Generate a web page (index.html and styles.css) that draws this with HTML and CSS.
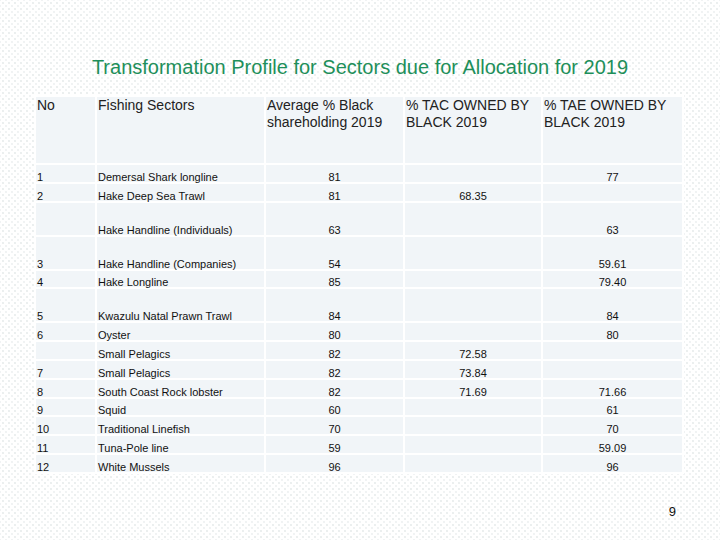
FILE: index.html
```html
<!DOCTYPE html>
<html lang="en">
<head>
<meta charset="utf-8">
<title>Transformation Profile</title>
<link rel="stylesheet" href="styles.css">
</head>
<body>
<main class="slide">
  <h1 class="title">Transformation Profile for Sectors due for Allocation for 2019</h1>
  <table class="profile">
    <colgroup>
      <col class="c-no"><col class="c-sector"><col class="c-avg"><col class="c-tac"><col class="c-tae">
    </colgroup>
    <thead>
      <tr class="head">
        <th>No</th>
        <th>Fishing Sectors</th>
        <th>Average % Black<br>shareholding 2019</th>
        <th>% TAC OWNED BY<br>BLACK 2019</th>
        <th>% TAE OWNED BY<br>BLACK 2019</th>
      </tr>
    </thead>
    <tbody>
      <tr><td>1</td><td>Demersal Shark longline</td><td class="num">81</td><td class="num"></td><td class="num">77</td></tr>
      <tr><td>2</td><td>Hake Deep Sea Trawl</td><td class="num">81</td><td class="num">68.35</td><td class="num"></td></tr>
      <tr class="tall"><td></td><td>Hake Handline (Individuals)</td><td class="num">63</td><td class="num"></td><td class="num">63</td></tr>
      <tr class="tall"><td>3</td><td>Hake Handline (Companies)</td><td class="num">54</td><td class="num"></td><td class="num">59.61</td></tr>
      <tr><td>4</td><td>Hake Longline</td><td class="num">85</td><td class="num"></td><td class="num">79.40</td></tr>
      <tr class="tall"><td>5</td><td>Kwazulu Natal Prawn Trawl</td><td class="num">84</td><td class="num"></td><td class="num">84</td></tr>
      <tr><td>6</td><td>Oyster</td><td class="num">80</td><td class="num"></td><td class="num">80</td></tr>
      <tr><td></td><td>Small Pelagics</td><td class="num">82</td><td class="num">72.58</td><td class="num"></td></tr>
      <tr><td>7</td><td>Small Pelagics</td><td class="num">82</td><td class="num">73.84</td><td class="num"></td></tr>
      <tr><td>8</td><td>South Coast Rock lobster</td><td class="num">82</td><td class="num">71.69</td><td class="num">71.66</td></tr>
      <tr><td>9</td><td>Squid</td><td class="num">60</td><td class="num"></td><td class="num">61</td></tr>
      <tr><td>10</td><td>Traditional Linefish</td><td class="num">70</td><td class="num"></td><td class="num">70</td></tr>
      <tr><td>11</td><td>Tuna-Pole line</td><td class="num">59</td><td class="num"></td><td class="num">59.09</td></tr>
      <tr><td>12</td><td>White Mussels</td><td class="num">96</td><td class="num"></td><td class="num">96</td></tr>
    </tbody>
  </table>
  <div class="page-no">9</div>
</main>
</body>
</html>
```

FILE: styles.css
```css
html, body {
  margin: 0;
  padding: 0;
}

body {
  width: 720px;
  height: 540px;
  overflow: hidden;
  background-color: #ffffff;
  background-image:
    radial-gradient(circle, #e5eaea 0.6px, transparent 1px),
    radial-gradient(circle, #eceff0 0.6px, transparent 1px);
  background-size: 6px 6px, 6px 6px;
  background-position: 0 0, 3px 3px;
  font-family: "Liberation Sans", Arial, sans-serif;
  color: #111;
}

.slide {
  display: flex;
  flex-direction: column;
  padding-top: 55px;
}

.title {
  margin: 0;
  font-size: 20px;
  line-height: 24px;
  font-weight: normal;
  color: #1e8f5a;
  text-align: center;
}

.profile {
  margin: 16px 0 0 34px;
  border-collapse: separate;
  border-spacing: 2px;
  table-layout: fixed;
  width: 650px;
  background: #ffffff;
}

.c-no { width: 59px; }
.c-sector { width: 167px; }
.c-avg { width: 137px; }
.c-tac { width: 136px; }
.c-tae { width: 139px; }

.profile th,
.profile td {
  background: #f1f5f8;
  padding: 0 0 0 1px;
  white-space: nowrap;
}

.head th {
  height: 66px;
  vertical-align: top;
  text-align: left;
  font-weight: normal;
  font-size: 14px;
  line-height: 17px;
  color: #222;
  padding-top: 0;
}

.profile td {
  height: 16.8px;
  font-size: 11px;
  line-height: 10px;
  vertical-align: bottom;
  padding-bottom: 0;
  box-sizing: border-box;
  color: #111;
}

.profile tr.tall td {
  height: 32px;
}

.profile td.num {
  text-align: center;
  padding-left: 0;
}

.page-no {
  margin-top: 30px;
  padding-right: 44px;
  text-align: right;
  font-size: 13px;
  line-height: 15px;
  color: #111;
}
```
